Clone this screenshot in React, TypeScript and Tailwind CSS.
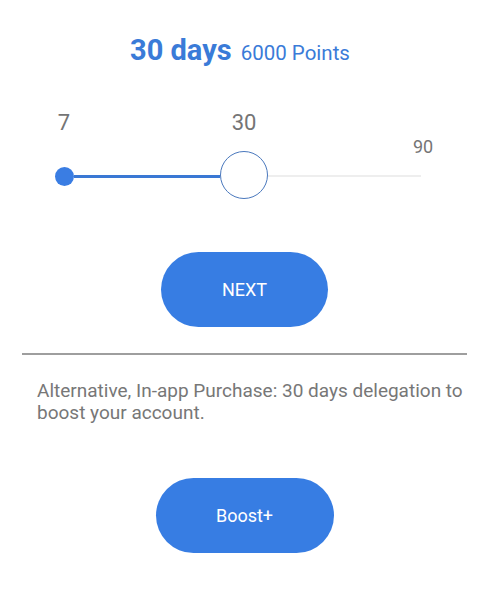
import React from "react";

const font = {fontFamily: "Roboto, 'Noto Sans', sans-serif"};

const DaySlider = () => {
    return (
        <div className="mt-[43px] text-[#757575]">
            <div className="flex items-start pl-[44px]">
                <span className="w-[40px] text-center text-[22px] leading-[26px]">7</span>
                <span className="ml-[140px] w-[40px] text-center text-[22px] leading-[26px]">30</span>
                <span className="ml-[139px] mt-[26px] w-[40px] text-center text-[18px] leading-[22px]">90</span>
            </div>
            <div className="-mt-[6px] flex h-[48px] items-center pl-[55px]">
                <div className="h-[19px] w-[19px] rounded-full bg-[#3a7de3]"/>
                <div className="h-[3px] w-[146px] bg-[#3a78d4]"/>
                <div className="-mt-[3px] h-[48px] w-[48px] rounded-full border-[1.5px] border-[#4a78bd] bg-white"/>
                <div className="h-[2px] w-[153px] bg-[#eeeeee]"/>
            </div>
        </div>
    );
};

export default function App() {
    return (
        <div className="h-[600px] w-[489px] bg-white" style={font}>
            <div className="flex h-[67px] items-baseline justify-center gap-[9px] pr-[9px] pt-[33px] text-[#3a7bd8]">
                <h1 className="text-[29px] font-bold leading-[34px]">30 days</h1>
                <span className="text-[20.5px] leading-[34px]">6000 Points</span>
            </div>

            <DaySlider/>

            <button
                className="mx-auto mt-[52px] flex h-[75px] w-[167px] items-center justify-center rounded-full bg-[#377de3] text-[18px] text-white">
                NEXT
            </button>

            <div className="mx-[22px] mt-[26px] h-[2px] bg-[#9e9e9e]"/>

            <p className="mt-[25px] pl-[37px] pr-[16px] text-[19px] leading-[22px] text-[#777777]">
                Alternative, In-app Purchase: 30 days delegation to boost your account.
            </p>

            <button
                className="mx-auto mt-[54px] flex h-[75px] w-[178px] items-center justify-center rounded-full bg-[#377de3] text-[18px] text-white">
                Boost+
            </button>
        </div>
    );
}
